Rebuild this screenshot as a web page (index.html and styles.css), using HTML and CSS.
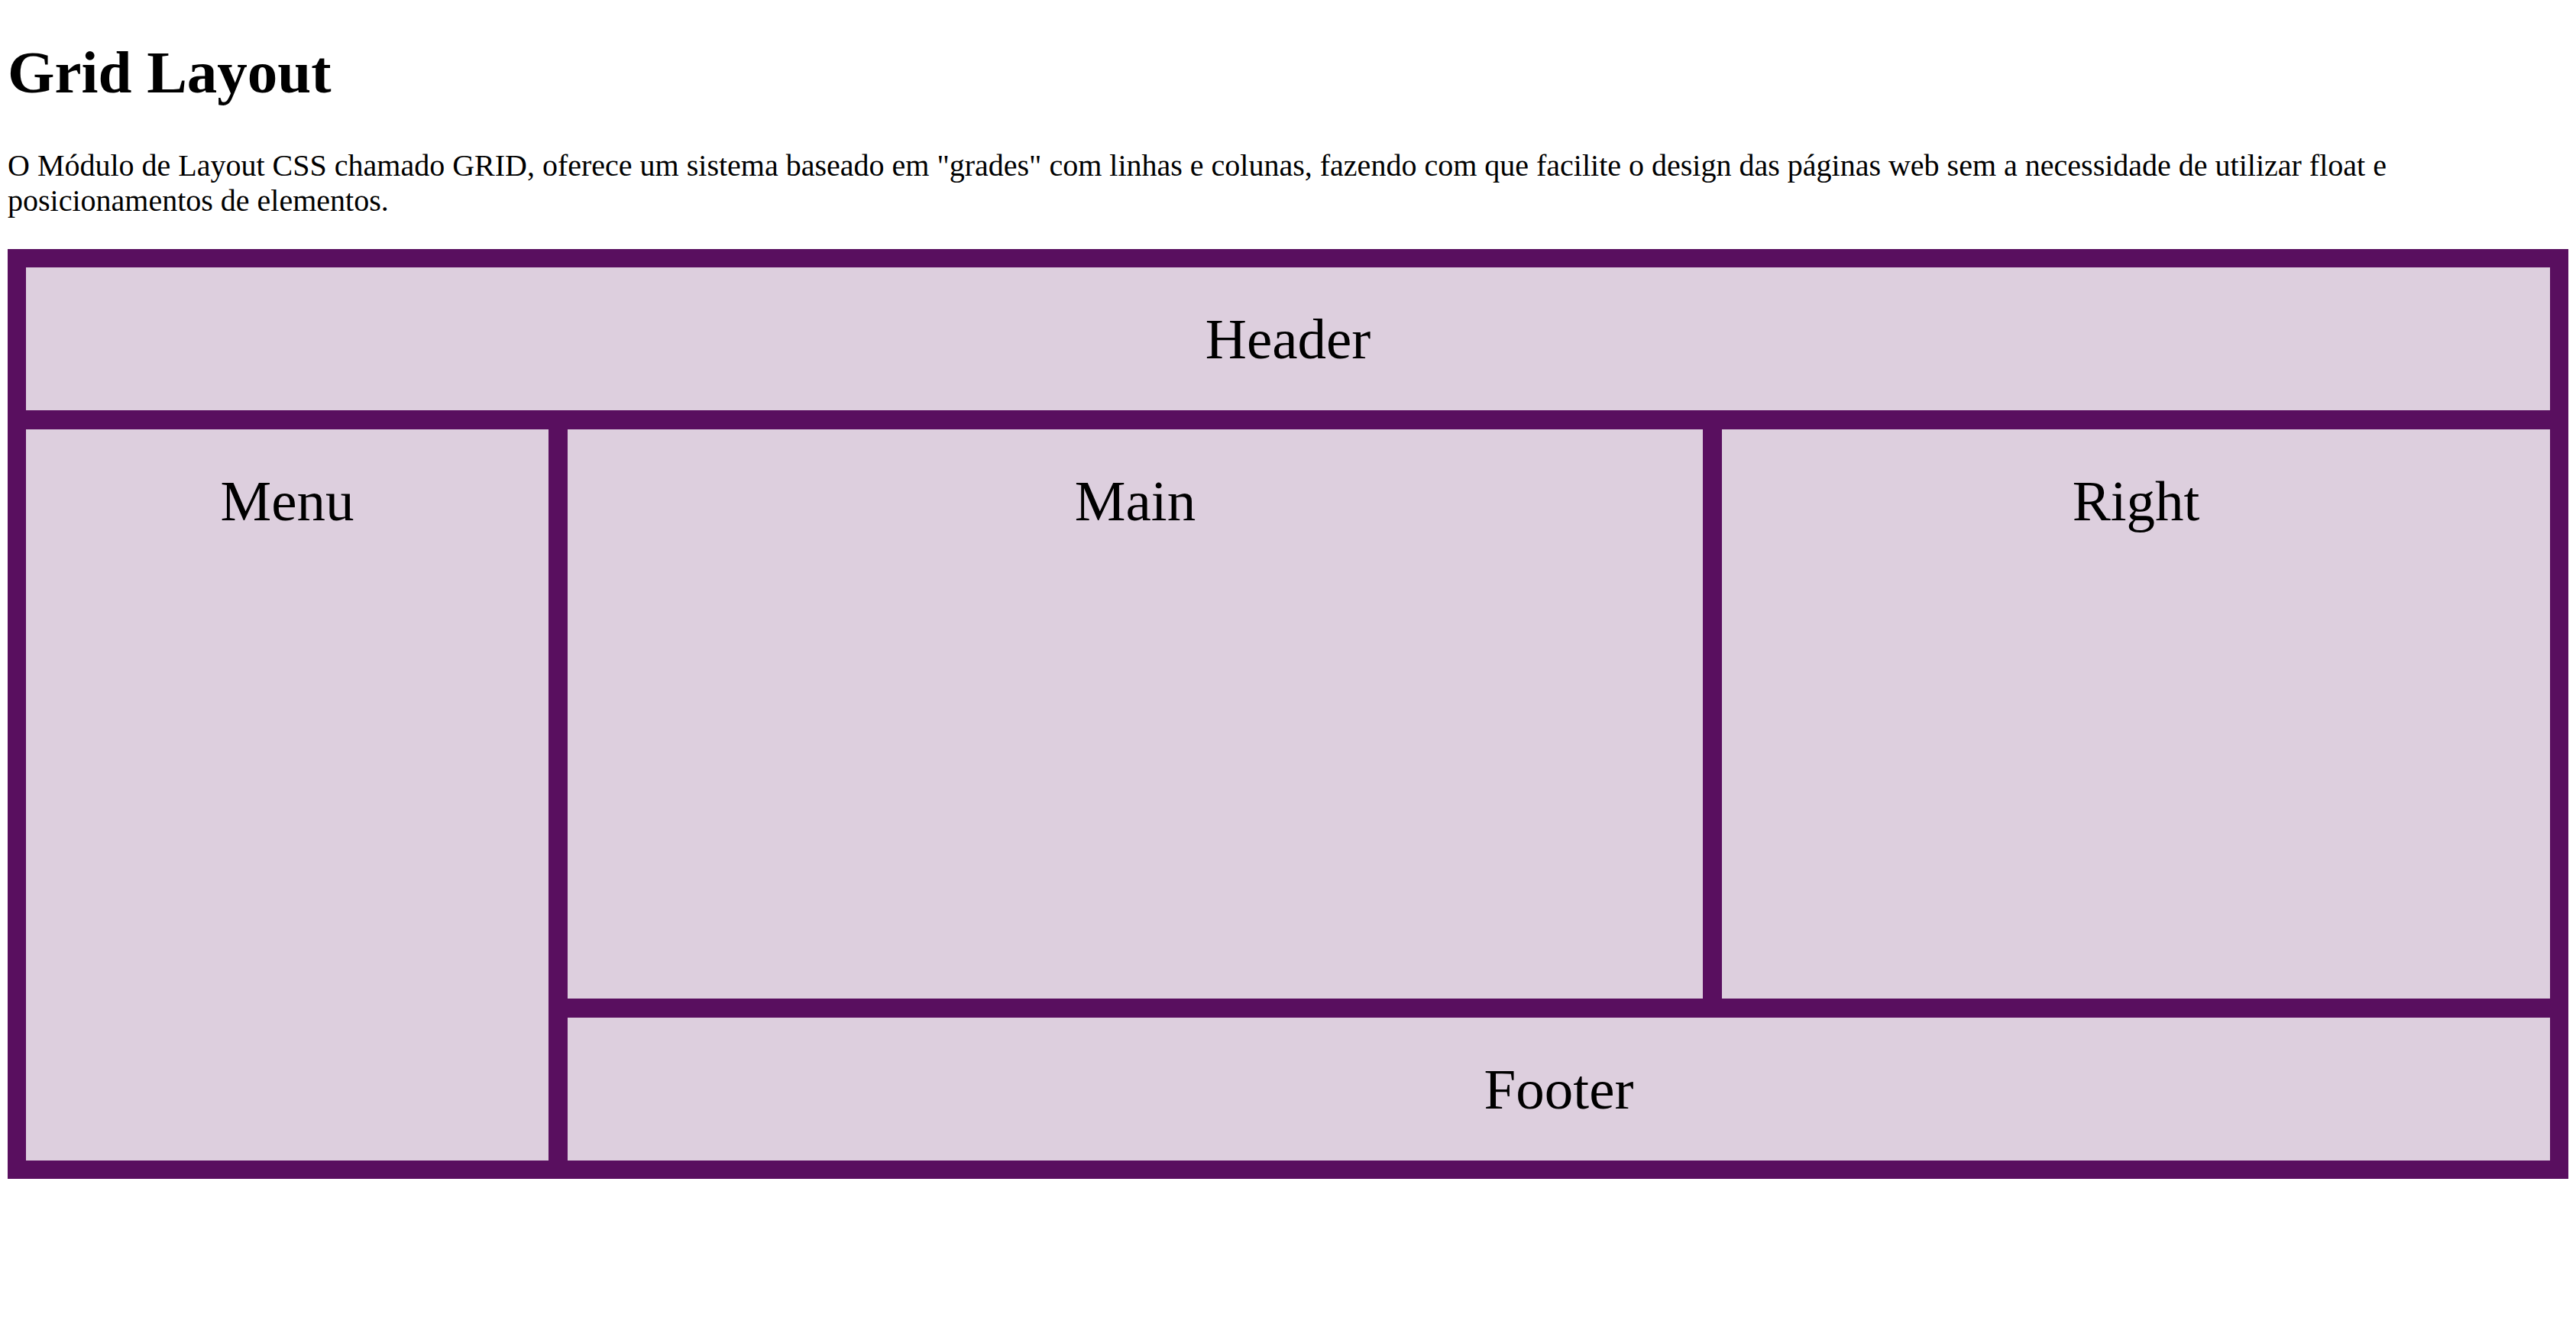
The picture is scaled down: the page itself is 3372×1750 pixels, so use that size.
FILE: index.html
```html
<!DOCTYPE html>
<html lang="pt-BR">
<head>
<meta charset="utf-8">
<title>Grid Layout</title>
<link rel="stylesheet" href="styles.css">
</head>
<body>
<h1>Grid Layout</h1>
<p>O Módulo de Layout CSS chamado GRID, oferece um sistema baseado em "grades" com linhas e colunas, fazendo com que facilite o design das páginas web sem a necessidade de utilizar float e posicionamentos de elementos.</p>
<div class="grid-container">
<header class="item header">Header</header>
<nav class="item menu">Menu</nav>
<main class="item main">Main</main>
<aside class="item right">Right</aside>
<footer class="item footer">Footer</footer>
</div>
</body>
</html>
```
FILE: styles.css
```css
body {
  margin: 51px 10px 0;
  background: #fff;
  color: #000;
  font-family: "Liberation Serif", "Times New Roman", serif;
  font-size: 40px;
  line-height: 46px;
}

h1 {
  margin: 0 0 55px;
  font-size: 79px;
  line-height: 88px;
}

p {
  margin: 0 0 40px;
}

.grid-container {
  display: grid;
  grid-template-areas:
    "header header header"
    "menu main right"
    "menu footer footer";
  grid-template-columns: 684fr 1486fr 1084fr;
  grid-template-rows: auto 745px auto;
  gap: 25px;
  padding: 24px;
  background: #590f5f;
}

.item {
  padding: 50px 0;
  background: #ddcfde;
  font-size: 75px;
  line-height: 87px;
  text-align: center;
}

.header { grid-area: header; }
.menu { grid-area: menu; }
.main { grid-area: main; }
.right { grid-area: right; }
.footer { grid-area: footer; }
```
